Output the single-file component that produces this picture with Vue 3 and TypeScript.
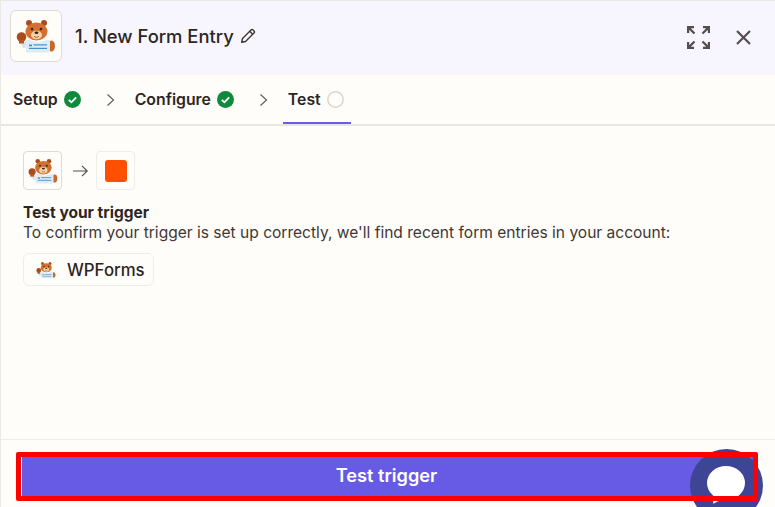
<script setup lang="ts">
const tabs: { label: string; state: 'done' | 'open'; active?: boolean }[] = [
  { label: 'Setup', state: 'done' },
  { label: 'Configure', state: 'done' },
  { label: 'Test', state: 'open', active: true },
]
</script>

<template>
  <div class="page">
    <svg class="defs" width="0" height="0" aria-hidden="true">
      <symbol id="bear" viewBox="0 0 40 40">
        <ellipse cx="35.500" cy="30" rx="3.500" ry="5.500" fill="#c8672c" />
        <path d="M4 27l8-2v6l-5 1z" fill="#d5e6ee" />
        <rect x="10" y="24" width="24" height="12.500" rx="1.200" fill="#dcedf6" />
        <path d="M14 24l8 2.500 8-2.500z" fill="#fff" />
        <circle cx="5.500" cy="21" r="4.800" fill="#a94d1c" />
        <rect x="3" y="24" width="5" height="3.500" fill="#b9551f" />
        <circle cx="13" cy="7" r="3" fill="#a94d1c" />
        <circle cx="28" cy="7" r="3" fill="#a94d1c" />
        <ellipse cx="20.500" cy="15.500" rx="11" ry="9" fill="#d26f31" />
        <ellipse cx="20.500" cy="19" rx="5.500" ry="4.300" fill="#f6d3a4" />
        <circle cx="16" cy="13" r="1.300" fill="#3a2418" />
        <circle cx="25" cy="13" r="1.300" fill="#3a2418" />
        <ellipse cx="20.500" cy="16.800" rx="2" ry="1.300" fill="#3a2418" />
        <path d="M18.200 20.300c1.500 1.300 3.100 1.300 4.600 0" stroke="#8a3b15" fill="none" stroke-width=".8" />
        <rect x="13" y="28.500" width="3" height="1.800" fill="#4a90c8" />
        <rect x="17.500" y="28.300" width="13.500" height="1.200" fill="#4a90c8" />
        <rect x="13" y="31.800" width="18" height="1.200" fill="#4a90c8" />
      </symbol>
    </svg>

    <header class="head">
      <div class="logo-box"><svg class="logo" width="40" height="40"><use href="#bear" /></svg></div>
      <h1 class="title">1. New Form Entry</h1>
      <svg class="pencil" width="16" height="16" viewBox="0 0 16 16" fill="none" stroke="#3b3534" stroke-width="1.4" stroke-linejoin="round">
        <path d="M1.700 14.300l.8-3.800L11 2a1.500 1.500 0 0 1 2.100 0l.9.9a1.500 1.500 0 0 1 0 2.100l-8.500 8.500z" />
        <path d="M9.700 3.300l3 3" />
      </svg>
      <div class="head-actions">
        <svg width="23" height="23" viewBox="0 0 23 23" fill="none" stroke="#544e4d" stroke-width="2.200">
          <path d="M1.100 7V1.100H7M1.100 1.100l6.400 6.400M16 1.100h5.900V7M21.900 1.100l-6.400 6.400M1.100 16v5.900H7M1.100 21.900l6.400-6.400M21.900 16v5.900H16M21.900 21.900l-6.400-6.400" />
        </svg>
        <svg width="15" height="15" viewBox="0 0 15 15" fill="none" stroke="#544e4d" stroke-width="2.200">
          <path d="M1 1l13 13M14 1L1 14" />
        </svg>
      </div>
    </header>

    <nav class="tabs">
      <template v-for="(tab, i) in tabs" :key="tab.label">
        <div class="tab" :class="{ active: tab.active }">
          <span>{{ tab.label }}</span>
          <svg v-if="tab.state === 'done'" width="17" height="17" viewBox="0 0 17 17">
            <circle cx="8.500" cy="8.500" r="8.500" fill="#0f8a3c" />
            <path d="M4.800 8.800l2.600 2.500 4.800-5" fill="none" stroke="#fff" stroke-width="1.800" />
          </svg>
          <svg v-else width="17" height="17" viewBox="0 0 17 17">
            <circle cx="8.500" cy="8.500" r="7.700" fill="none" stroke="#d9d6cd" stroke-width="1.500" />
          </svg>
        </div>
        <svg v-if="i < tabs.length - 1" class="chev" width="9" height="14" viewBox="0 0 9 14" fill="none" stroke="#6b6665" stroke-width="1.300">
          <path d="M1.500 1.500l6 5.500-6 5.500" />
        </svg>
      </template>
    </nav>

    <main class="body">
      <div class="flow">
        <div class="flow-box strong"><svg width="30" height="30"><use href="#bear" /></svg></div>
        <svg class="arrow" width="15" height="12" viewBox="0 0 15 12" fill="none" stroke="#544e4d" stroke-width="1.200">
          <path d="M0 6h14M9 .8L14.200 6 9 11.200" />
        </svg>
        <div class="flow-box"><span class="square"></span></div>
      </div>
      <h2 class="test-title">Test your trigger</h2>
      <p class="test-text">To confirm your trigger is set up correctly, we'll find recent form entries in your account:</p>
      <div class="chip">
        <svg width="20" height="20"><use href="#bear" /></svg>
        <span>WPForms</span>
      </div>
    </main>

    <footer class="foot">
      <button class="cta" type="button">Test trigger</button>
      <div class="chat"><span class="bubble"></span><span class="tail"></span></div>
      <div class="mark"></div>
    </footer>
  </div>
</template>

<style>
html, body { margin: 0; background: #fffdf9; }
</style>

<style scoped>
.page {
  width: 775px;
  height: 507px;
  box-sizing: border-box;
  border-top: 1px solid #ebe9e4;
  border-left: 1px solid #ebe9e4;
  background: #fffdf9;
  font-family: Inter, "Liberation Sans", sans-serif;
  color: #2d2523;
  display: flex;
  flex-direction: column;
  overflow: hidden;
}
.defs { position: absolute; }
.head {
  height: 74px;
  flex: none;
  box-sizing: border-box;
  background: #f7f6fe;
  display: flex;
  align-items: center;
  padding: 0 24px 4px 9px;
}
.logo-box {
  width: 52px;
  height: 52px;
  box-sizing: border-box;
  border: 1px solid #dedbd3;
  border-radius: 6px;
  background: #fffdf9;
  display: flex;
  align-items: center;
  justify-content: center;
}
.title {
  margin: 0 0 0 13px;
  font-size: 18.400px;
  font-weight: 500;
  line-height: 24px;
}
.pencil { margin-left: 6px; }
.head-actions {
  margin-left: auto;
  margin-top: 2px;
  display: flex;
  align-items: center;
  gap: 26px;
}
.tabs {
  height: 51px;
  flex: none;
  box-sizing: border-box;
  border-bottom: 2px solid #e9e7e1;
  display: flex;
  align-items: stretch;
  padding-left: 12px;
}
.tab {
  display: flex;
  align-items: center;
  gap: 6px;
  font-size: 15.800px;
  font-weight: 600;
  border-bottom: 2px solid transparent;
  height: 49px;
  padding-top: 2px;
  box-sizing: border-box;
}
.tab.active {
  border-bottom-color: #6a5ae6;
  padding: 2px 7px 0 5px;
  margin-left: -5px;
}
.chev {
  align-self: center;
  margin: 0 20px 0 25px;
}
.body {
  flex: 1;
  padding: 25px 22px 0;
}
.flow {
  display: flex;
  align-items: center;
}
.arrow { margin: 0 8px 0 11px; }
.flow-box {
  width: 39px;
  height: 39px;
  box-sizing: border-box;
  border: 1px solid #efede7;
  border-radius: 4px;
  display: flex;
  align-items: center;
  justify-content: center;
}
.flow-box.strong { border-color: #dedbd3; }
.square {
  width: 22px;
  height: 22px;
  background: #ff4f00;
  border-radius: 3px;
}
.test-title {
  margin: 13px 0 0;
  font-size: 15.500px;
  font-weight: 700;
  line-height: 20px;
}
.test-text {
  margin: 0;
  font-size: 15.550px;
  line-height: 20px;
  color: #3e3735;
}
.chip {
  margin-top: 10px;
  width: 131px;
  height: 33px;
  box-sizing: border-box;
  border: 1px solid #efede7;
  border-radius: 6px;
  display: flex;
  align-items: center;
  gap: 11px;
  padding-left: 12px;
  font-size: 16.800px;
  font-weight: 500;
}
.foot {
  position: relative;
  height: 68px;
  flex: none;
  box-sizing: border-box;
  border-top: 1px solid #efede7;
  padding: 17px 21px 0;
}
.cta {
  display: block;
  width: 731px;
  height: 39px;
  border: none;
  border-radius: 0;
  background: #675ae5;
  color: #fff;
  font: 600 18.200px/24px Inter, "Liberation Sans", sans-serif;
  padding: 0 2px 4px 0;
}
.chat {
  position: absolute;
  left: 689px;
  top: 9px;
  width: 73px;
  height: 73px;
  border-radius: 50%;
  background: #3d4594;
}
.bubble {
  position: absolute;
  left: 17px;
  top: 17px;
  width: 38px;
  height: 34px;
  border-radius: 50%;
  background: #fff;
}
.tail {
  position: absolute;
  left: 20px;
  top: 44px;
  width: 0;
  height: 0;
  border-left: 6px solid transparent;
  border-right: 8px solid transparent;
  border-top: 12px solid #fff;
  transform: rotate(30deg);
}
.mark {
  position: absolute;
  left: 15px;
  top: 12px;
  width: 742px;
  height: 49px;
  box-sizing: border-box;
  border: 5px solid #ff0000;
  border-radius: 2px;
}
</style>
